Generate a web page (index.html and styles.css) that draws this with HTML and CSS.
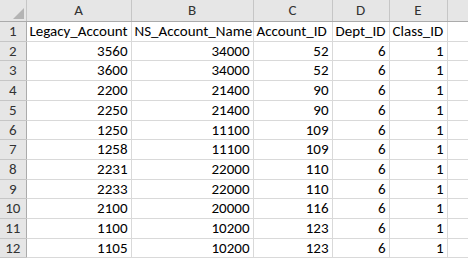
FILE: index.html
```html
<!DOCTYPE html>
<html lang="en">
<head>
    <meta charset="UTF-8">
    <title>Accounts</title>
    <link rel="stylesheet" href="styles.css">
</head>
<body>
    <table class="sheet">
        <colgroup>
            <col class="col-row">
            <col class="col-a">
            <col class="col-b">
            <col class="col-c">
            <col class="col-d">
            <col class="col-e">
            <col class="col-f">
        </colgroup>
        <thead>
            <tr>
                <th class="corner"><span class="corner-mark"></span></th>
                <th>A</th>
                <th>B</th>
                <th>C</th>
                <th>D</th>
                <th>E</th>
                <th></th>
            </tr>
        </thead>
        <tbody>
            <tr><th>1</th><td>Legacy_Account</td><td>NS_Account_Name</td><td>Account_ID</td><td>Dept_ID</td><td>Class_ID</td><td></td></tr>
            <tr><th>2</th><td class="num">3560</td><td class="num">34000</td><td class="num">52</td><td class="num">6</td><td class="num">1</td><td></td></tr>
            <tr><th>3</th><td class="num">3600</td><td class="num">34000</td><td class="num">52</td><td class="num">6</td><td class="num">1</td><td></td></tr>
            <tr><th>4</th><td class="num">2200</td><td class="num">21400</td><td class="num">90</td><td class="num">6</td><td class="num">1</td><td></td></tr>
            <tr><th>5</th><td class="num">2250</td><td class="num">21400</td><td class="num">90</td><td class="num">6</td><td class="num">1</td><td></td></tr>
            <tr><th>6</th><td class="num">1250</td><td class="num">11100</td><td class="num">109</td><td class="num">6</td><td class="num">1</td><td></td></tr>
            <tr><th>7</th><td class="num">1258</td><td class="num">11100</td><td class="num">109</td><td class="num">6</td><td class="num">1</td><td></td></tr>
            <tr><th>8</th><td class="num">2231</td><td class="num">22000</td><td class="num">110</td><td class="num">6</td><td class="num">1</td><td></td></tr>
            <tr><th>9</th><td class="num">2233</td><td class="num">22000</td><td class="num">110</td><td class="num">6</td><td class="num">1</td><td></td></tr>
            <tr><th>10</th><td class="num">2100</td><td class="num">20000</td><td class="num">116</td><td class="num">6</td><td class="num">1</td><td></td></tr>
            <tr><th>11</th><td class="num">1100</td><td class="num">10200</td><td class="num">123</td><td class="num">6</td><td class="num">1</td><td></td></tr>
            <tr><th>12</th><td class="num">1105</td><td class="num">10200</td><td class="num">123</td><td class="num">6</td><td class="num">1</td><td></td></tr>
        </tbody>
    </table>
</body>
</html>
```

FILE: styles.css
```css
body {
    margin: 0;
    background-color: #ffffff;
    font-family: 'Carlito', 'Liberation Sans', sans-serif;
    overflow: hidden;
}
.sheet {
    border-collapse: collapse;
    table-layout: fixed;
    width: 468px;
    font-size: 15px;
    color: #000;
}
.col-row { width: 26px; }
.col-a { width: 105px; }
.col-b { width: 122px; }
.col-c { width: 79px; }
.col-d { width: 57px; }
.col-e { width: 58px; }
.col-f { width: 21px; }
.sheet th,
.sheet td {
    padding: 0 3px;
    height: 18.7px;
    line-height: 18.7px;
    white-space: nowrap;
    overflow: hidden;
    border: 1px solid #d9d9d9;
}
.sheet thead th {
    height: 21px;
    line-height: 21px;
    background-color: #e6e6e6;
    font-weight: normal;
    color: #333;
    text-align: center;
    border-color: #c6c6c6;
    border-bottom-color: #ababab;
    border-top: none;
}
.sheet tbody th {
    background-color: #e6e6e6;
    font-weight: normal;
    color: #333;
    text-align: center;
    border-color: #c6c6c6;
    border-right-color: #ababab;
    border-left: none;
}
.sheet thead th:first-child {
    border-left: none;
}
.sheet tr > :last-child {
    border-right: none;
}
.num {
    text-align: right;
}
.corner {
    position: relative;
}
.corner-mark {
    position: absolute;
    right: 2px;
    bottom: 2px;
    width: 0;
    height: 0;
    border-left: 11px solid transparent;
    border-bottom: 11px solid #b4b4b4;
}
```
